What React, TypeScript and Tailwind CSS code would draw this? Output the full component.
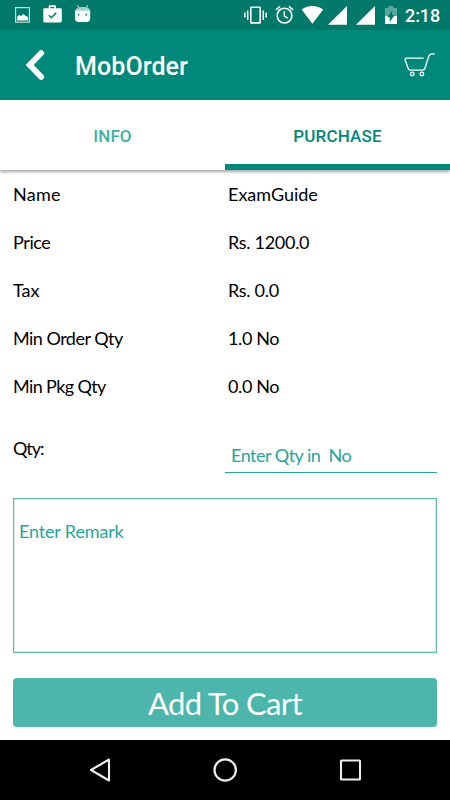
import React from "react";

const details = [
  { label: "Name", labelClass: "tracking-[0.3px]", value: "ExamGuide", valueClass: "tracking-[0px]" },
  { label: "Price", labelClass: "tracking-[-0.4px]", value: "Rs. 1200.0", valueClass: "tracking-[-0.3px]" },
  { label: "Tax", labelClass: "tracking-[0px]", value: "Rs. 0.0", valueClass: "tracking-[-0.3px]" },
  { label: "Min Order Qty", labelClass: "tracking-[-0.52px]", value: "1.0 No", valueClass: "tracking-[-0.4px]" },
  { label: "Min Pkg Qty", labelClass: "tracking-[-0.62px]", value: "0.0 No", valueClass: "tracking-[-0.4px]" },
];

function StatusBar() {
  return (
    <div className="flex h-[30px] items-center bg-[#00796b] text-white">
      <svg className="ml-[15px] h-[30px] w-[15px]" viewBox="15 0 15 30" fill="none">
        <rect x="15.6" y="7.6" width="13.8" height="14.6" stroke="#b9dcd7" strokeWidth="1.2" />
        <path d="M17 20.5V17l2-2 2 1 2.5-2 1.5 1.5L28 17v3.5Z" fill="white" />
      </svg>
      <svg className="ml-[13px] h-[30px] w-[19px]" viewBox="43 0 19 30" fill="none">
        <path d="M49.5 9V6.2h5.6V9" stroke="white" strokeWidth="1.7" strokeLinejoin="round" />
        <rect x="43.3" y="8.3" width="18.5" height="14.2" rx="1.4" fill="white" />
        <path d="m48.8 15.3 2.5 2.5 5-5" stroke="#00796b" strokeWidth="1.5" />
      </svg>
      <svg className="ml-[13px] h-[30px] w-[16px]" viewBox="75 0 16 30" fill="none">
        <path d="m77.7 5.2 1.8 4M87.6 5.2l-1.8 4" stroke="#b9dcd7" strokeWidth="1.1" />
        <path d="M75.3 11c0-2.5 3-4 7.4-4s7.4 1.5 7.4 4Z" fill="#a8d2cc" />
        <path d="M75 10.7h15.2V18c0 3-1.7 4-3.7 4h-7.6c-2.2 0-3.9-1-3.9-4Z" fill="white" />
        <path d="M77.8 14h1.5v1.5h-1.5zM85.5 14h1.5v1.5h-1.5z" fill="#00796b" />
      </svg>
      <svg className="ml-auto h-[30px] w-[23px]" viewBox="244 0 23 30" fill="none" stroke="white" strokeWidth="1.6">
        <rect x="250.8" y="7.3" width="9.4" height="15.6" rx="0.5" />
        <path d="M244.8 12.5v5M247.7 10.5v9.5M263.3 10.5v9.5M266.2 12.5v5" strokeWidth="1.5" />
      </svg>
      <svg className="ml-[8px] h-[30px] w-[19px]" viewBox="275 0 19 30" fill="none" stroke="white" strokeWidth="1.6">
        <circle cx="284.5" cy="15.6" r="7.4" />
        <path d="m275.9 9.8 4.2-3.5M293.1 9.8l-4.2-3.5" />
        <path d="M284.3 11.2v4.8l3.5 2.1" strokeWidth="1.4" />
      </svg>
      <svg className="ml-[7px] h-[30px] w-[23px]" viewBox="301 0 23 30" fill="white">
        <path d="M312.4 23.8 301.6 9.6c6-4.7 15.6-4.7 21.6 0Z" />
      </svg>
      <svg className="ml-[4px] h-[30px] w-[19px]" viewBox="328 0 19 30">
        <path d="M328 24.8 347 6v18.8Z" fill="white" />
      </svg>
      <svg className="ml-[9px] h-[30px] w-[19px]" viewBox="356 0 19 30">
        <path d="M356 24.8 375 6v18.8Z" fill="white" />
      </svg>
      <svg className="ml-[10px] h-[30px] w-[12px]" viewBox="385 0 12 30">
        <path d="M385 16V8h3.6V6h4.8v2H397v8Z" fill="#5aa79e" />
        <path d="M385 16h12v8h-12Z" fill="white" />
        <path d="M392.200 10.500v4.500h2.500l-5 7V17h-2.500Z" fill="#00796b" />
      </svg>
      <span className="mt-px mr-[11px] ml-[8px] w-[34px] text-[18px] leading-none font-medium tracking-[-0.1px] whitespace-nowrap">2:18</span>
    </div>
  );
}

function Header() {
  return (
    <header className="flex h-[70px] items-center bg-[#00897b] text-white">
      <svg className="ml-[25px] h-[32px] w-[20px]" viewBox="0 0 20 32" fill="none">
        <path d="M16.200 4 4.700 16l11.500 12" stroke="white" strokeWidth="5.8" strokeLinecap="round" strokeLinejoin="miter" />
      </svg>
      <h1 className="mt-[2px] ml-[30px] text-[25px] leading-none font-medium tracking-[0.1px]">MobOrder</h1>
      <svg className="mr-[14px] ml-auto h-[24px] w-[32px]" viewBox="404 53 32 24" fill="none" stroke="white" strokeWidth="1.3">
        <path d="M423.7 58.2h-17.2c-1.2 0-1.7.8-1.3 2l3 8.3c.4 1.1 1 1.6 2.1 1.600h12.2c1.3 0 2-.5 2.4-1.8l4-12.4c.5-1.5 1.4-2.1 2.7-2.1h3.2" />
        <circle cx="412.3" cy="74" r="1.8" />
        <circle cx="421.9" cy="74" r="1.8" />
      </svg>
    </header>
  );
}

function NavigationBar() {
  return (
    <nav className="flex h-[60px] items-center justify-center gap-[100px] bg-black">
      <svg className="h-6 w-[25px]" viewBox="0 0 25 24" fill="none" stroke="#eee" strokeWidth="2.1">
        <path d="M21 1.5v21L3 12Z" strokeLinejoin="round" />
      </svg>
      <svg className="h-6 w-[25px]" viewBox="0 0 25 24" fill="none" stroke="#eee" strokeWidth="2.2">
        <circle cx="12.2" cy="12" r="10.7" />
      </svg>
      <svg className="h-6 w-[25px]" viewBox="0 0 25 24" fill="none" stroke="#eee" strokeWidth="2.1">
        <rect x="3" y="2.5" width="19" height="19" rx="0.6" />
      </svg>
    </nav>
  );
}

export default function App() {
  return (
    <div className="flex h-[800px] w-[450px] flex-col overflow-hidden bg-white font-['Roboto',sans-serif]">
      <StatusBar />
      <Header />
      <div className="grid h-[70px] shrink-0 grid-cols-2 bg-white text-[17px] font-medium shadow-[0_2px_3px_rgba(0,0,0,0.35)]">
        <button className="pt-[3px] tracking-[0.1px] text-[#3db2a5]">INFO</button>
        <button className="border-b-6 border-[#00897b] pt-[9px] tracking-[0.2px] text-[#00897b]">PURCHASE</button>
      </div>
      <main className="flex flex-1 flex-col px-[13px] font-['Lato',sans-serif] text-[18px] leading-6 text-black">
        <dl className="mt-3 grid grid-cols-[215px_1fr] gap-y-6 whitespace-pre">
          {details.map((d) => (
            <React.Fragment key={d.label}>
              <dt className={d.labelClass}>{d.label}</dt>
              <dd className={d.valueClass}>{d.value}</dd>
            </React.Fragment>
          ))}
        </dl>
        <div className="mt-[38px] flex h-[37px] items-start">
          <label className="w-[212px] tracking-[-1px]">Qty:</label>
          <div className="mt-[7px] h-[30px] flex-1 border-b border-[#26a69a] pl-[6px] tracking-[-0.5px] whitespace-pre text-[#26a69a]">Enter Qty in  No</div>
        </div>
        <div className="mt-[25px] h-[155px] border border-[#63bcb2] px-[5px] pt-5 tracking-[-0.15px] text-[#26a69a] shadow-[inset_0_0_0_0.5px_#a5d8d2]">Enter Remark</div>
        <button className="mt-[25px] h-[49px] rounded-[4px] bg-[#4db6ac] pt-px text-[31px] leading-none tracking-[-0.65px] text-white">Add To Cart</button>
      </main>
      <NavigationBar />
    </div>
  );
}
